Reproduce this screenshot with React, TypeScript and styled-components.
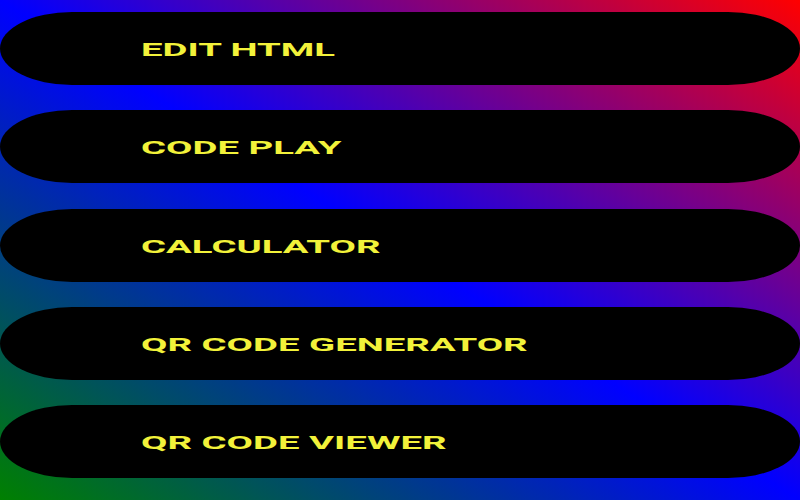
import React from "react";
import styled, { createGlobalStyle } from "styled-components";

const GlobalStyle = createGlobalStyle`
  html, body {
    margin: 0;
    padding: 0;
  }
  body {
    font-family: Roboto, "Liberation Sans", Arial, sans-serif;
  }
`;

const Page = styled.div`
  width: 800px;
  height: 500px;
  overflow: hidden;
  box-sizing: border-box;
  padding-top: 12px;
  background: linear-gradient(to top right, #008000, #0000ff, #ff0000);
  display: flex;
  flex-direction: column;
  gap: 25.25px;
`;

const MenuButton = styled.a`
  display: flex;
  align-items: center;
  height: 73px;
  flex: 0 0 73px;
  background: #000;
  border-radius: 72px / 36.5px;
  padding-left: 141px;
  padding-top: 3px;
  box-sizing: border-box;
  text-decoration: none;
  cursor: pointer;
`;

const Label = styled.span`
  display: inline-block;
  color: #f2f23a;
  font-family: Roboto, "Liberation Sans", Arial, sans-serif;
  font-weight: 700;
  font-size: 18px;
  line-height: 1;
  white-space: nowrap;
  transform: scaleX(2.13);
  transform-origin: left center;
`;

const items = [
  "EDIT HTML",
  "CODE PLAY",
  "CALCULATOR",
  "QR CODE GENERATOR",
  "QR CODE VIEWER",
];

export default function App() {
  return (
    <>
      <GlobalStyle />
      <Page>
        {items.map((t) => (
          <MenuButton key={t}>
            <Label>{t}</Label>
          </MenuButton>
        ))}
      </Page>
    </>
  );
}
